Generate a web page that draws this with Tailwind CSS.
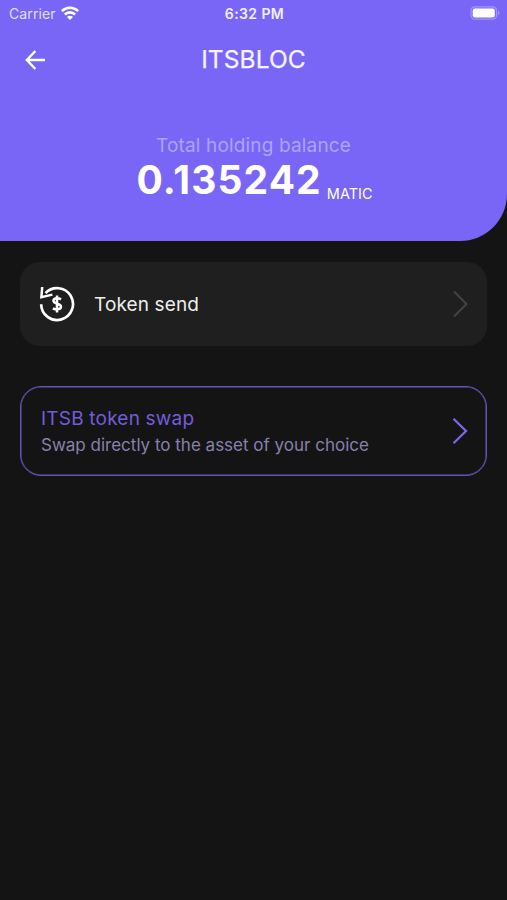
<!DOCTYPE html>
<html lang="en">
<head>
<meta charset="utf-8">
<title>ITSBLOC</title>
<script src="https://cdn.jsdelivr.net/npm/@tailwindcss/browser@4"></script>
</head>
<body class="bg-[#141414] h-[900px] overflow-hidden font-['Inter',sans-serif] text-white">
<header class="h-[241px] bg-[#7966f7] rounded-br-[47px] flex flex-col">
  <div class="h-[27px] grid grid-cols-3 items-center pl-[9px] pr-[7px] shrink-0">
    <div class="flex items-center gap-[5px] text-[14px] leading-7 tracking-[0.1px] text-[#e3dfff]"><span>Carrier</span>
      <svg class="w-[18px] h-[14px] relative -top-px" viewBox="0 0 18 14" fill="none" stroke="#fff" stroke-width="2.6"><path d="M.9 5.1a11.5 11.5 0 0 1 16.2 0M3.9 8.5a7.2 7.2 0 0 1 10.2 0"/><path d="M9 13.9 6 10.9a4.2 4.2 0 0 1 6 0z" fill="#fff" stroke="none"/></svg>
    </div>
    <div class="text-center text-[14px] font-semibold leading-7 tracking-[0.4px] text-[#f2efff]">6:32 PM</div>
    <svg class="w-[30px] h-[14px] justify-self-end relative -top-px" viewBox="0 0 30 14"><rect x="1" y=".8" width="25.5" height="12.4" rx="3.6" fill="none" stroke="#a397fa" stroke-width="1.2"/><rect x="2.7" y="2.5" width="22.1" height="9" rx="2" fill="#fff"/><path d="M28 4.8q3 2.2 0 4.4z" fill="#a397fa"/></svg>
  </div>
  <div class="h-[65px] grid grid-cols-[70px_1fr_70px] items-center shrink-0">
    <svg class="w-5 h-5 ml-[25px]" viewBox="0 0 20 20" fill="none" stroke="#fff" stroke-width="2.4"><path d="M20 10H2M10.4 1 1.8 10l8.6 9"/></svg>
    <h1 class="pb-px text-center text-[24.5px] leading-8 tracking-[0.1px] text-[#f6f4ff] [-webkit-text-stroke:0.25px_#f6f4ff]">ITSBLOC</h1>
  </div>
  <div class="mt-[40px] flex flex-col items-center">
    <p class="pt-px text-[19px] leading-[25px] tracking-[0.16px] text-[#aea3fb]">Total holding balance</p>
    <div class="flex items-baseline gap-[5px] pl-[2px] leading-[44px]"><span class="text-[39px] font-bold tracking-[1.1px]">0.135242</span><span class="relative top-[5px] text-[14.5px]">MATIC</span></div>
  </div>
</header>
<main class="px-5 pt-[21px] flex flex-col gap-[40px]">
  <section class="h-[84px] rounded-[20px] bg-[#1f1f1f] flex items-center pl-[19px] pr-[19px]">
    <svg class="w-9 h-9 shrink-0" viewBox="0 0 36 36" fill="none" stroke="#fff"><path d="M2.2 18.2A15.9 15.9 0 1 0 6.5 7.2" stroke-width="2.7"/><path d="M3.2 1 2.4 11.2 13.4 8.6" stroke-width="2.5"/><path d="M18 9.5v17M22 13.3c-2.9-1.6-7.5-1.4-7.5 1.5 0 3.7 7.5 2.2 7.5 6 0 3-4.9 3.3-8.1 1.5" stroke-width="2.5"/></svg>
    <span class="ml-[19px] pt-px text-[19px] leading-7 tracking-[0.12px] text-[#eeeeee]">Token send</span>
    <svg class="ml-auto w-4 h-7" viewBox="0 0 16 28" fill="none" stroke="#444" stroke-width="2"><path d="m2 1.5 12.5 12.5L2 26.5"/></svg>
  </section>
  <section class="h-[90px] rounded-[21px] border border-[#6652b4] shadow-[inset_0_0_0_0.5px_#6652b4] flex items-center pl-5 pr-[18px]">
    <div class="flex flex-col"><span class="text-[19px] leading-[27px] tracking-[0.2px] text-[#725dda]">ITSB token swap</span><span class="text-[17px] leading-[26px] text-[#8980ad]">Swap directly to the asset of your choice</span></div>
    <svg class="ml-auto w-4 h-7" viewBox="0 0 16 28" fill="none" stroke="#7966ed" stroke-width="2.3"><path d="m1.5 1.8 12.5 12.2L1.5 26.2"/></svg>
  </section>
</main>
</body>
</html>
